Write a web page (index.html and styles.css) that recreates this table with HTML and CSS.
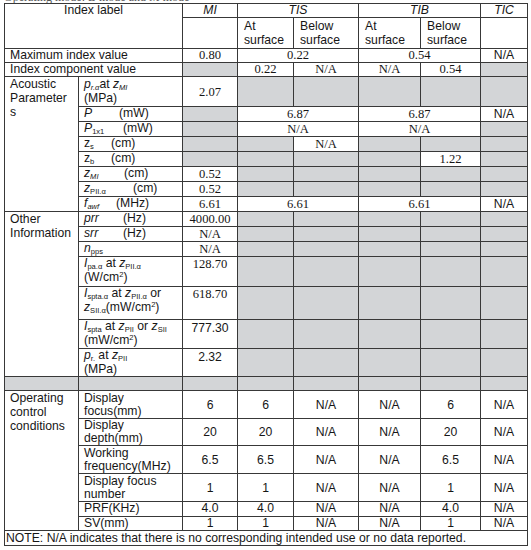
FILE: index.html
```html
<!DOCTYPE html>
<html>
<head>
<meta charset="utf-8">
<link rel="stylesheet" href="styles.css">
</head>
<body>
<div class="page">
  <div class="cut"><span>Operating mode: B mode and M mode</span></div>
  <table class="idx">
    <colgroup>
      <col class="c1"><col class="c2"><col class="c3"><col class="c4"><col class="c5"><col class="c6"><col class="c7"><col class="c8">
    </colgroup>
    <tr class="h14">
      <td colspan="2" rowspan="2" class="ctr top">Index label</td>
      <td class="ctr it">MI</td>
      <td colspan="2" class="ctr it">TIS</td>
      <td colspan="2" class="ctr it">TIB</td>
      <td class="ctr it">TIC</td>
    </tr>
    <tr class="h31">
      <td></td>
      <td class="sub top">At<br>surface</td>
      <td class="sub top">Below<br>surface</td>
      <td class="sub top">At<br>surface</td>
      <td class="sub top">Below<br>surface</td>
      <td></td>
    </tr>
    <tr class="h14">
      <td colspan="2" class="grp">Maximum index value</td>
      <td class="num">0.80</td>
      <td colspan="2" class="num">0.22</td>
      <td colspan="2" class="num">0.54</td>
      <td class="ctr">N/A</td>
    </tr>
    <tr class="h14">
      <td colspan="2" class="grp">Index component value</td>
      <td class="g"></td>
      <td class="num">0.22</td>
      <td class="num">N/A</td>
      <td class="num">N/A</td>
      <td class="num">0.54</td>
      <td class="g"></td>
    </tr>
    <tr class="h30">
      <td rowspan="8" class="grp top">Acoustic<br>Parameter<br>s</td>
      <td class="lb"><i>p</i><sub><i>r.α</i></sub>at <i>z</i><sub><i>MI</i></sub><br>(MPa)</td>
      <td class="num">2.07</td>
      <td class="g"></td><td class="g"></td><td class="g"></td><td class="g"></td><td class="g"></td>
    </tr>
    <tr class="h15">
      <td class="lb"><span class="t35"><i>P</i></span>(mW)</td>
      <td class="g"></td>
      <td colspan="2" class="num">6.87</td>
      <td colspan="2" class="num">6.87</td>
      <td class="ctr">N/A</td>
    </tr>
    <tr class="h15">
      <td class="lb"><span class="t39"><i>P</i><sub>1x1</sub></span>(mW)</td>
      <td class="g"></td>
      <td colspan="2" class="num">N/A</td>
      <td colspan="2" class="num">N/A</td>
      <td class="g"></td>
    </tr>
    <tr class="h15">
      <td class="lb"><span class="t27">z<sub>s</sub></span>(cm)</td>
      <td class="g"></td>
      <td class="g"></td>
      <td class="num">N/A</td>
      <td class="g"></td><td class="g"></td><td class="g"></td>
    </tr>
    <tr class="h15">
      <td class="lb"><span class="t27">z<sub>b</sub></span>(cm)</td>
      <td class="g"></td>
      <td class="g"></td><td class="g"></td><td class="g"></td>
      <td class="num">1.22</td>
      <td class="g"></td>
    </tr>
    <tr class="h15">
      <td class="lb"><span class="t40"><i>z</i><sub><i>MI</i></sub></span>(cm)</td>
      <td class="num">0.52</td>
      <td class="g"></td><td class="g"></td><td class="g"></td><td class="g"></td><td class="g"></td>
    </tr>
    <tr class="h15">
      <td class="lb"><span class="t49"><i>z</i><sub>PII.α</sub></span>(cm)</td>
      <td class="num">0.52</td>
      <td class="g"></td><td class="g"></td><td class="g"></td><td class="g"></td><td class="g"></td>
    </tr>
    <tr class="h15">
      <td class="lb"><span class="t32"><i>f</i><sub><i>awf</i></sub></span>(MHz)</td>
      <td class="num">6.61</td>
      <td colspan="2" class="num">6.61</td>
      <td colspan="2" class="num">6.61</td>
      <td class="ctr">N/A</td>
    </tr>
    <tr class="h15">
      <td rowspan="7" class="grp top">Other<br>Information</td>
      <td class="lb"><span class="t39"><i>prr</i></span>(Hz)</td>
      <td class="num">4000.00</td>
      <td class="g"></td><td class="g"></td><td class="g"></td><td class="g"></td><td class="g"></td>
    </tr>
    <tr class="h15">
      <td class="lb"><span class="t39"><i>srr</i></span>(Hz)</td>
      <td class="num">N/A</td>
      <td class="g"></td><td class="g"></td><td class="g"></td><td class="g"></td><td class="g"></td>
    </tr>
    <tr class="h15">
      <td class="lb"><i>n</i><sub>pps</sub></td>
      <td class="num">N/A</td>
      <td class="g"></td><td class="g"></td><td class="g"></td><td class="g"></td><td class="g"></td>
    </tr>
    <tr class="h30">
      <td class="lb top"><i>I</i><sub>pa.α</sub> at <i>z</i><sub>PII.α</sub><br>(W/cm<sup>2</sup>)</td>
      <td class="num top">128.70</td>
      <td class="g"></td><td class="g"></td><td class="g"></td><td class="g"></td><td class="g"></td>
    </tr>
    <tr class="h33">
      <td class="lb top"><i>I</i><sub>spta.α</sub> at <i>z</i><sub>PII.α</sub> or<br><i>z</i><sub>SII.α</sub>(mW/cm<sup>2</sup>)</td>
      <td class="num top">618.70</td>
      <td class="g"></td><td class="g"></td><td class="g"></td><td class="g"></td><td class="g"></td>
    </tr>
    <tr class="h29">
      <td class="lb top"><i>I</i><sub>spta</sub> at <i>z</i><sub>PII</sub> or <i>z</i><sub>SII</sub><br>(mW/cm<sup>2</sup>)</td>
      <td class="ctr top pt">777.30</td>
      <td class="g"></td><td class="g"></td><td class="g"></td><td class="g"></td><td class="g"></td>
    </tr>
    <tr class="h28">
      <td class="lb top"><i>p</i><sub>r.</sub> at <i>z</i><sub>PII</sub><br>(MPa)</td>
      <td class="ctr top pt">2.32</td>
      <td class="g"></td><td class="g"></td><td class="g"></td><td class="g"></td><td class="g"></td>
    </tr>
    <tr class="h14">
      <td class="g"></td><td class="g"></td><td class="g"></td><td class="g"></td><td class="g"></td><td class="g"></td><td class="g"></td><td class="g"></td>
    </tr>
    <tr class="h28">
      <td rowspan="6" class="grp top">Operating<br>control<br>conditions</td>
      <td class="lb op">Display<br>focus(mm)</td>
      <td class="ctr">6</td><td class="ctr">6</td><td class="ctr">N/A</td><td class="ctr">N/A</td><td class="ctr">6</td><td class="ctr">N/A</td>
    </tr>
    <tr class="h27">
      <td class="lb op">Display<br>depth(mm)</td>
      <td class="ctr">20</td><td class="ctr">20</td><td class="ctr">N/A</td><td class="ctr">N/A</td><td class="ctr">20</td><td class="ctr">N/A</td>
    </tr>
    <tr class="h28">
      <td class="lb op">Working<br>frequency(MHz)</td>
      <td class="ctr">6.5</td><td class="ctr">6.5</td><td class="ctr">N/A</td><td class="ctr">N/A</td><td class="ctr">6.5</td><td class="ctr">N/A</td>
    </tr>
    <tr class="h28">
      <td class="lb op">Display focus<br>number</td>
      <td class="ctr">1</td><td class="ctr">1</td><td class="ctr">N/A</td><td class="ctr">N/A</td><td class="ctr">1</td><td class="ctr">N/A</td>
    </tr>
    <tr class="h14">
      <td class="lb">PRF(KHz)</td>
      <td class="ctr">4.0</td><td class="ctr">4.0</td><td class="ctr">N/A</td><td class="ctr">N/A</td><td class="ctr">4.0</td><td class="ctr">N/A</td>
    </tr>
    <tr class="h14">
      <td class="lb">SV(mm)</td>
      <td class="ctr">1</td><td class="ctr">1</td><td class="ctr">N/A</td><td class="ctr">N/A</td><td class="ctr">1</td><td class="ctr">N/A</td>
    </tr>
    <tr class="h15">
      <td colspan="8" class="note">NOTE: N/A indicates that there is no corresponding intended use or no data reported.</td>
    </tr>
  </table>
</div>
</body>
</html>
```
FILE: styles.css
```css
html, body {
  margin: 0;
  padding: 0;
  background: #ffffff;
}

body {
  color: #161616;
  font-family: "Liberation Sans", Arial, sans-serif;
  font-size: 12.2px;
}

.page {
  padding-left: 4px;
}

.cut {
  height: 3px;
  overflow: hidden;
  font-family: "Liberation Serif", "Times New Roman", serif;
  font-size: 12px;
  color: #555;
}

.cut span {
  display: block;
  margin-top: -10px;
  line-height: 14px;
}

.idx {
  border-collapse: collapse;
  table-layout: fixed;
  width: 523px;
}

.c1 { width: 74px; }
.c2 { width: 104px; }
.c3 { width: 55px; }
.c4 { width: 56px; }
.c5 { width: 65px; }
.c6 { width: 62px; }
.c7 { width: 60px; }
.c8 { width: 47px; }

.idx td {
  border: 1px solid #383838;
  padding: 0;
  line-height: 14px;
  vertical-align: middle;
  white-space: nowrap;
  overflow: hidden;
}

.h14 { height: 14px; }
.h15 { height: 15px; }
.h27 { height: 27px; }
.h28 { height: 28px; }
.h29 { height: 29px; }
.h30 { height: 30px; }
.h31 { height: 31px; }
.h33 { height: 33px; }

.idx .h14 td { line-height: 13px; }

.idx td.top { vertical-align: top; }
.idx td.ctr { text-align: center; }
.idx td.it { font-style: italic; }

.idx td.sub {
  padding-left: 6px;
  line-height: 14px;
  padding-top: 1px;
}

.idx td.grp { padding-left: 5px; }

.idx td.lb {
  padding-left: 5px;
  line-height: 13.5px;
}

.idx td.op { line-height: 13px; }

.idx td.num {
  text-align: center;
  font-family: "Liberation Serif", "Times New Roman", serif;
  font-size: 12.6px;
}

.idx td.pt { padding-top: 1px; }

.idx td.g { background: #d3d5d7; }

.idx td.note { padding-left: 1px; }

.t27, .t32, .t35, .t39, .t40, .t49 { display: inline-block; }
.t27 { width: 27px; }
.t32 { width: 32px; }
.t35 { width: 35px; }
.t39 { width: 39px; }
.t40 { width: 40px; }
.t49 { width: 49px; }

sub {
  font-size: 0.62em;
  vertical-align: -0.25em;
  line-height: 0;
}

sup {
  font-size: 0.62em;
  vertical-align: 0.5em;
  line-height: 0;
}
```
